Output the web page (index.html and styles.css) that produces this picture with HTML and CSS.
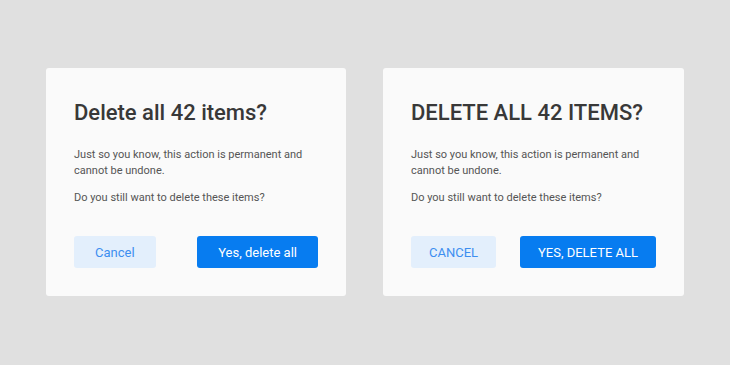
FILE: index.html
```html
<!DOCTYPE html>
<html>
<head>
    <title>Delete items</title>
    <link rel="stylesheet" href="styles.css">
</head>
<body>
    <div class="container">
        <div class="dialog">
            <h2>Delete all 42 items?</h2>
            <p>Just so you know, this action is permanent and cannot be undone.</p>
            <p>Do you still want to delete these items?</p>
            <div class="actions">
                <button class="btn btn-cancel">Cancel</button>
                <button class="btn btn-confirm">Yes, delete all</button>
            </div>
        </div>
        <div class="dialog caps">
            <h2>Delete all 42 items?</h2>
            <p>Just so you know, this action is permanent and cannot be undone.</p>
            <p>Do you still want to delete these items?</p>
            <div class="actions">
                <button class="btn btn-cancel">Cancel</button>
                <button class="btn btn-confirm">Yes, delete all</button>
            </div>
        </div>
    </div>
</body>
</html>
```

FILE: styles.css
```css
body {
    font-family: 'Roboto', sans-serif;
    margin: 0;
    padding: 0;
    background-color: #e0e0e0;
    color: #333333;
}

.container {
    display: flex;
    justify-content: center;
    gap: 37px;
    padding-top: 68px;
    height: 365px;
    box-sizing: border-box;
}

.dialog {
    width: 300px;
    height: 228px;
    box-sizing: border-box;
    background: #fafafa;
    border-radius: 3px;
    padding: 31px 28px 0 28px;
}

.dialog.caps {
    width: 301px;
}

h2 {
    margin: 0 0 20px 0;
    font-size: 22px;
    font-weight: 500;
    line-height: 28px;
    color: #383838;
}

.dialog p {
    margin: 0 0 11px 0;
    font-size: 11px;
    line-height: 16px;
    color: #555555;
    padding-right: 10px;
}

.actions {
    display: flex;
    justify-content: space-between;
    margin-top: 30px;
}

.btn {
    font-family: 'Roboto', sans-serif;
    font-size: 13px;
    height: 32px;
    border: none;
    border-radius: 3px;
    padding: 0 21px;
    cursor: pointer;
}

.btn-cancel {
    background: #e3effc;
    color: #3d8ef0;
}

.btn-confirm {
    background: #077cf0;
    color: #ffffff;
}

.caps h2,
.caps .btn {
    text-transform: uppercase;
}

.caps .btn {
    padding: 0 18px;
}
```
